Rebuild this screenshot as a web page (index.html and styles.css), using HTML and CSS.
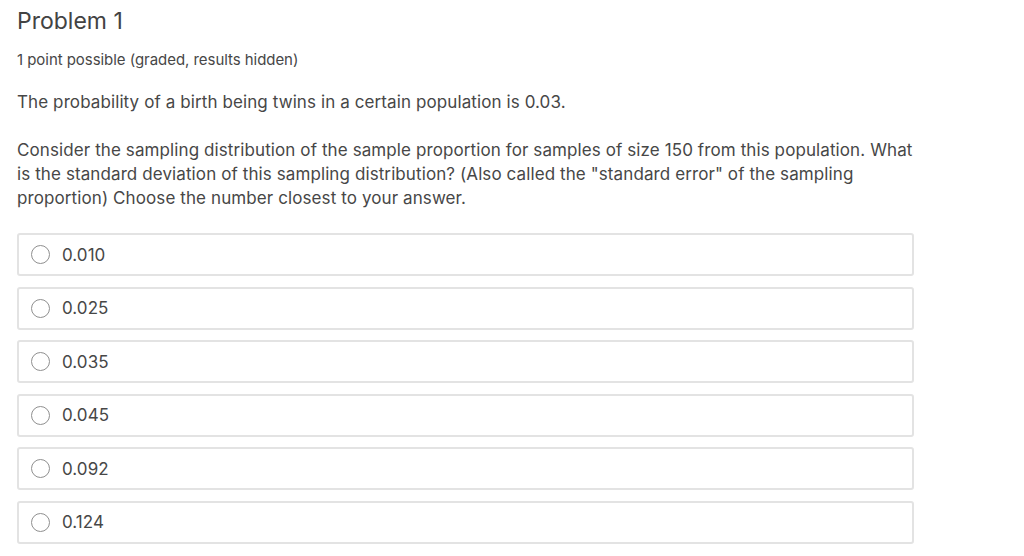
FILE: index.html
```html
<!DOCTYPE html>
<html>
<head>
<meta charset="utf-8">
<link rel="stylesheet" href="styles.css">
</head>
<body>
<div class="problem">
  <h2 class="title">Problem 1</h2>
  <div class="meta">1 point possible (graded, results hidden)</div>
  <p class="para first">The probability of a birth being twins in a certain population is 0.03.</p>
  <p class="para second">Consider the sampling distribution of the sample proportion for samples of size 150 from this population. What is the standard deviation of this sampling distribution? (Also called the "standard error" of the sampling proportion) Choose the number closest to your answer.</p>
  <div class="choices">
    <label class="choice"><span class="radio"></span><span class="label">0.010</span></label>
    <label class="choice"><span class="radio"></span><span class="label">0.025</span></label>
    <label class="choice"><span class="radio"></span><span class="label">0.035</span></label>
    <label class="choice"><span class="radio"></span><span class="label">0.045</span></label>
    <label class="choice"><span class="radio"></span><span class="label">0.092</span></label>
    <label class="choice"><span class="radio"></span><span class="label">0.124</span></label>
  </div>
</div>
</body>
</html>
```
FILE: styles.css
```css
html, body {
  margin: 0;
  padding: 0;
  background: #ffffff;
}
body {
  font-family: Inter, "Noto Sans", sans-serif;
  color: #474747;
}
.problem {
  padding: 7px 0 0 17px;
  width: 897px;
}
.title {
  margin: 0;
  font-size: 23px;
  font-weight: 400;
  line-height: 28px;
  color: #434343;
}
.meta {
  margin-top: 15px;
  font-size: 15px;
  letter-spacing: -0.05px;
  line-height: 20px;
}
.para {
  margin: 0;
  font-size: 17px;
  letter-spacing: 0.1px;
  line-height: 24px;
}
.para.first { margin-top: 20px; }
.para.second { margin-top: 24px; }
.choices {
  margin-top: 23px;
  display: flex;
  flex-direction: column;
  gap: 10.6px;
}
.choice {
  display: flex;
  align-items: center;
  height: 43px;
  box-sizing: border-box;
  border: 2px solid #e3e3e3;
  border-radius: 3px;
  padding-left: 12px;
  font-size: 17px;
  letter-spacing: 0.05px;
}
.radio {
  width: 19px;
  height: 19px;
  box-sizing: border-box;
  border: 1px solid #8f8f8f;
  border-radius: 50%;
  margin-right: 12px;
}
.label {
  line-height: 24px;
}
```
